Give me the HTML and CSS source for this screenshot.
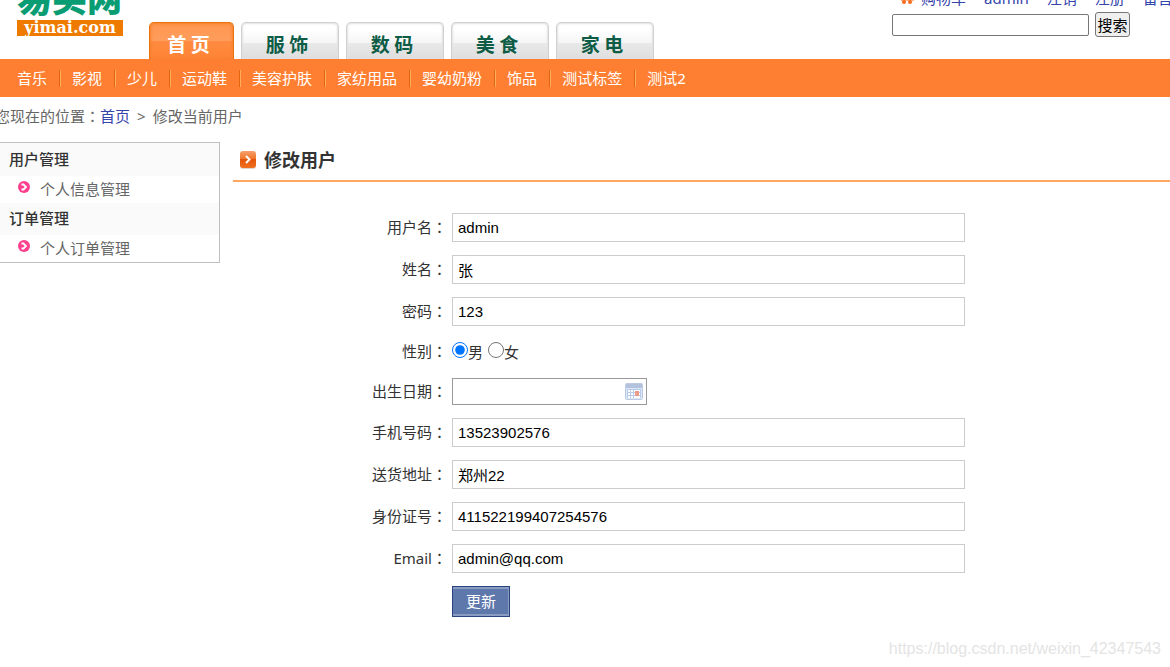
FILE: index.html
```html
<!DOCTYPE html>
<html lang="zh-CN">
<head>
<meta charset="utf-8">
<title>易买网 - 修改用户</title>
<link rel="stylesheet" href="styles.css">
</head>
<body>
<header class="header">
  <a class="logo" href="#"><span class="logo-name">易买网</span><span class="logo-domain">yimai.com</span></a>
  <nav class="tabs">
    <a class="tab tab-active" href="#">首 页</a>
    <a class="tab" href="#">服 饰</a>
    <a class="tab" href="#">数 码</a>
    <a class="tab" href="#">美 食</a>
    <a class="tab" href="#">家 电</a>
  </nav>
  <div class="tools">
    <div class="links">
      <a class="cart" href="#"><svg width="16" height="16" viewBox="0 0 16 16"><path d="M0 2h3l2 8h8l2-6H4" fill="none" stroke="#ff7f32" stroke-width="2"/><path d="M2 8h13v3H2z" fill="#ffb48c"/><circle cx="5" cy="12" r="2" fill="#f76b1c"/><circle cx="11" cy="12" r="2" fill="#f76b1c"/></svg>购物车</a>
      <a href="#">admin</a>
      <a href="#">注销</a>
      <a href="#">注册</a>
      <a href="#">留言</a>
    </div>
    <form class="search">
      <input class="search-box" type="text" aria-label="搜索">
      <button class="search-button" type="button">搜索</button>
    </form>
  </div>
</header>
<nav class="categories">
  <a href="#">音乐</a>
  <a href="#">影视</a>
  <a href="#">少儿</a>
  <a href="#">运动鞋</a>
  <a href="#">美容护肤</a>
  <a href="#">家纺用品</a>
  <a href="#">婴幼奶粉</a>
  <a href="#">饰品</a>
  <a href="#">测试标签</a>
  <a href="#">测试2</a>
</nav>
<div class="position">您现在的位置<span class="colon" lang="zh-TW">：</span><a href="#">首页</a><span class="arrow">&gt;</span>修改当前用户</div>
<div class="page">
  <aside class="sidebar">
    <h2>用户管理</h2>
    <a href="#"><svg width="12" height="12" viewBox="0 0 12 12"><circle cx="6" cy="6" r="6" fill="#ff3e8e"/><path d="M3.500 3.500l2 0M3.500 8.500l2 0M5 3l3 3-3 3" fill="none" stroke="#fff" stroke-width="1.800"/></svg>个人信息管理</a>
    <h2>订单管理</h2>
    <a href="#"><svg width="12" height="12" viewBox="0 0 12 12"><circle cx="6" cy="6" r="6" fill="#ff3e8e"/><path d="M3.500 3.500l2 0M3.500 8.500l2 0M5 3l3 3-3 3" fill="none" stroke="#fff" stroke-width="1.800"/></svg>个人订单管理</a>
  </aside>
  <main class="main">
    <h1 class="title"><svg width="16" height="18" viewBox="0 0 16 18"><defs><linearGradient id="badge" x1="0" y1="0" x2="0" y2="1"><stop offset="0" stop-color="#f4a06c"/><stop offset=".5" stop-color="#f27325"/><stop offset=".5" stop-color="#e4560c"/><stop offset="1" stop-color="#f0701f"/></linearGradient></defs><rect y="1" width="16" height="17" rx="3" fill="#e3d5cc"/><rect width="16" height="17" rx="3" fill="url(#badge)"/><path d="M6 5l3.500 3.500L6 12" fill="none" stroke="#fff" stroke-width="2"/></svg>修改用户</h1>
    <form class="form">
      <label for="username">用户名<span class="colon" lang="zh-TW">：</span></label>
      <input class="field" id="username" type="text" value="admin">
      <label for="name">姓名<span class="colon" lang="zh-TW">：</span></label>
      <input class="field" id="name" type="text" value="张">
      <label for="password">密码<span class="colon" lang="zh-TW">：</span></label>
      <input class="field" id="password" type="text" value="123">
      <span class="caption" id="gender">性别<span class="colon" lang="zh-TW">：</span></span>
      <div class="radios" role="radiogroup" aria-labelledby="gender">
        <label><input type="radio" name="sex" checked>男</label>
        <label><input type="radio" name="sex">女</label>
      </div>
      <label for="birthday">出生日期<span class="colon" lang="zh-TW">：</span></label>
      <div class="date">
        <input id="birthday" type="text">
        <svg width="18" height="17" viewBox="0 0 18 17"><rect x=".5" y=".5" width="17" height="16" rx="1" fill="#dce7f6" stroke="#bccbe2"/><path d="M1 1h16v4H1z" fill="#b3c3dd"/><path d="M2 6h14v9H2z" fill="#fff"/><path d="M2 6.500h14M2 9.500h14M2 12.500h14M2.500 6v9M5.500 6v9M8.500 6v9M15.500 6v9" stroke="#b9cceb" fill="none"/><path d="M10 8h4v5h-4z" fill="#ee9b88"/></svg>
      </div>
      <label for="mobile">手机号码<span class="colon" lang="zh-TW">：</span></label>
      <input class="field" id="mobile" type="text" value="13523902576">
      <label for="address">送货地址<span class="colon" lang="zh-TW">：</span></label>
      <input class="field" id="address" type="text" value="郑州22">
      <label for="identity">身份证号<span class="colon" lang="zh-TW">：</span></label>
      <input class="field" id="identity" type="text" value="411522199407254576">
      <label for="email">Email<span class="colon" lang="zh-TW">：</span></label>
      <input class="field" id="email" type="text" value="admin@qq.com">
      <button class="submit" type="button">更新</button>
    </form>
  </main>
</div>
<div class="watermark">https://blog.csdn.net/weixin_42347543</div>
</body>
</html>
```
FILE: styles.css
```css
* { box-sizing: border-box; }
body {
  margin: 0;
  overflow-x: hidden;
  background: #fff;
  color: #333;
  font: 15px/20px "Noto Sans", "Noto Sans CJK SC", sans-serif;
}
a { color: #34a; text-decoration: none; }
input, button { margin: 0; font-size: 15px; }
.colon { font-family: "Noto Sans CJK TC", sans-serif; }

.header { display: flex; align-items: flex-end; height: 59px; overflow: hidden; }
.logo {
  display: flex;
  flex-direction: column;
  flex: none;
  width: 106px;
  margin: 0 26px 23px 17px;
}
.logo-name {
  color: #0a9d74;
  font: 900 35px/46px "Noto Sans CJK SC", sans-serif;
  white-space: nowrap;
}
.logo-domain {
  background: #ef7a00;
  color: #fff;
  font: bold 16px/16px "DejaVu Serif", serif;
  text-align: center;
}
.tabs { display: flex; gap: 7px; }
.tab {
  width: 98px;
  height: 37px;
  padding-right: 6px;
  border: 1px solid #d0d0d0;
  border-bottom: 0;
  border-radius: 5px 5px 0 0;
  background: linear-gradient(#fff 0 20%, #f5f5f5 55%, #e9e9e9 56%, #dedede);
  box-shadow: inset 0 0 2px 1px #e2e2e2;
  color: #0d5c46;
  font: bold 19px/41px "Noto Sans CJK SC", sans-serif;
  text-align: center;
  white-space: nowrap;
}
.tab-active {
  width: 85px;
  border-color: #ec7109;
  background: linear-gradient(#ff9650, #ff9d5c 50%, #ff8b40 51%, #ff8435);
  box-shadow: inset 0 0 3px 1px #f5822d;
  color: #fff;
}
.tools {
  display: flex;
  flex-direction: column;
  gap: 4px;
  width: 278px;
  margin-left: auto;
  padding-bottom: 22px;
}
.links { display: flex; gap: 18px; padding-left: 7px; white-space: nowrap; }
.cart { display: flex; align-items: center; gap: 6px; }
.search { display: flex; align-items: center; gap: 6px; }
.search-box { width: 197px; height: 22px; border: 1px solid #767676; border-radius: 2px; }
.search-button {
  width: 35px;
  height: 25px;
  padding: 0;
  border: 1px solid #767676;
  border-radius: 3px;
  background: #efefef;
  color: #000;
  font-family: "Noto Sans CJK SC", sans-serif;
}

.categories {
  display: flex;
  align-items: center;
  height: 38px;
  padding-left: 6px;
  background: #ff7f32;
}
.categories a {
  padding: 0 14px 0 11px;
  background: linear-gradient(90deg, #e0650f 50%, #ffac5c 50%) right / 2px 17px no-repeat;
  color: #fff;
  line-height: 17px;
  white-space: nowrap;
}
.categories a:last-child { background: none; }
.position { margin-left: -5px; padding: 9px 0 16px; color: #666; }
.arrow { padding: 0 7px; }

.page { display: flex; align-items: flex-start; gap: 13px; }
.sidebar {
  flex: none;
  width: 220px;
  border: 1px solid #bfbfbf;
  border-left: 0;
  background: #fafafa;
}
.sidebar h2 {
  margin: 0;
  padding: 0 0 1px 9px;
  font-size: 15px;
  line-height: 32px;
  font-weight: 500;
}
.sidebar h2 ~ h2 { line-height: 31px; }
.sidebar a {
  display: flex;
  gap: 10px;
  padding-left: 18px;
  background: #fff;
  color: #666;
  line-height: 27px;
}
.sidebar svg { margin-top: 5px; }
.main { flex: 1; min-width: 0; }
.title {
  display: flex;
  align-items: center;
  gap: 8px;
  margin: 0;
  padding: 0 0 2px 7px;
  border-bottom: 2px solid #ffa75e;
  font-size: 18px;
  line-height: 36px;
  font-weight: 700;
}
.form {
  display: grid;
  grid-template-columns: 214px minmax(0, 513px);
  gap: 13px 5px;
  align-items: center;
  padding-top: 31px;
}
.form > label, .caption { padding-bottom: 2px; text-align: right; }
.field {
  width: 100%;
  height: 29px;
  padding: 0 5px;
  border: 1px solid #ccc;
  color: #000;
  font-family: "Liberation Sans", "Noto Sans CJK SC", sans-serif;
}
.radios { display: flex; gap: 5px; height: 26px; }
.radios label { display: flex; align-items: center; }
.radios input { width: 16px; height: 16px; margin-bottom: 4px; }
.date {
  display: flex;
  align-items: center;
  width: 195px;
  height: 27px;
  padding-right: 3px;
  border: 1px solid #999;
}
.date input { flex: 1; min-width: 0; height: 25px; border: 0; outline: 0; }
.submit {
  grid-column: 2;
  width: 58px;
  height: 31px;
  padding: 0 0 2px;
  border: 1px solid #29447e;
  background: #5f78ab;
  box-shadow: inset 0 2px #8a9cc2, inset -1px -2px #8a9cc2;
  color: #fff;
  font-family: "Noto Sans CJK SC", sans-serif;
}
.watermark {
  position: absolute;
  right: 9px;
  bottom: 8px;
  color: #e4e4e4;
  font: 16px/20px "Liberation Sans", sans-serif;
}
```
